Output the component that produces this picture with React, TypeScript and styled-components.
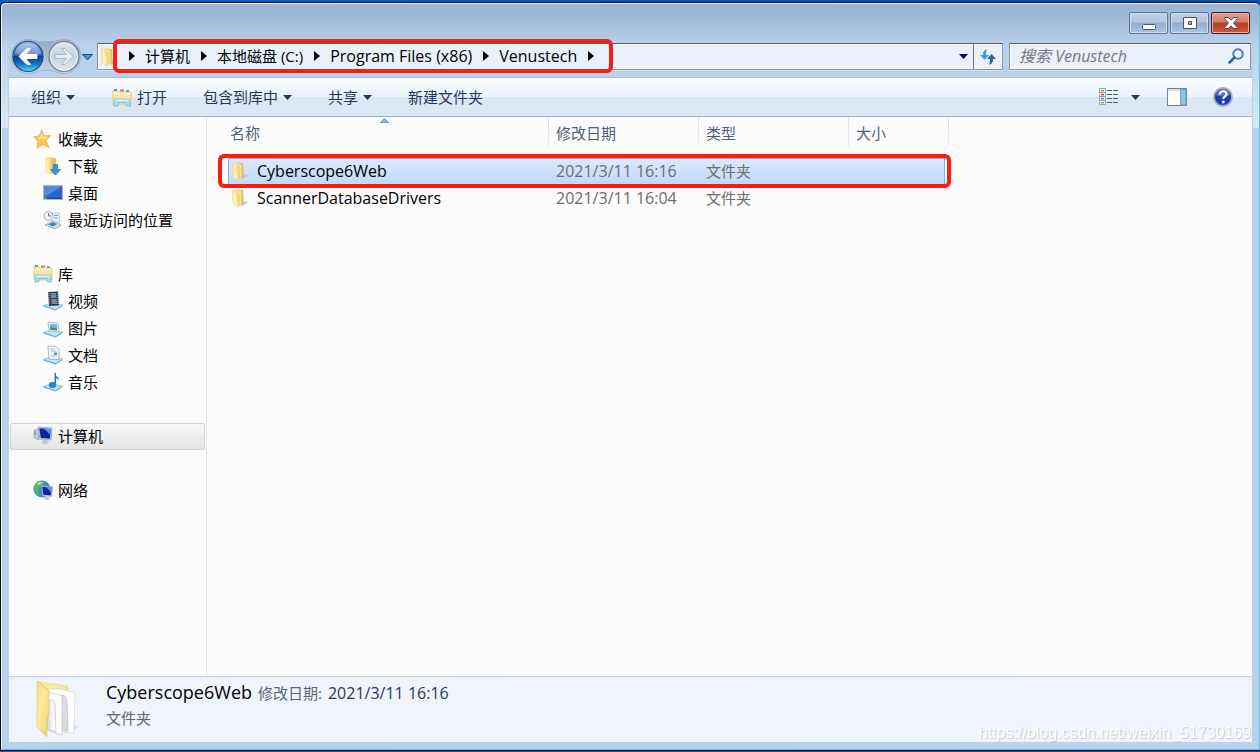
import React from 'react';
import styled, { createGlobalStyle, css } from 'styled-components';

const uiFont = `'Open Sans', 'Noto Sans CJK SC', sans-serif`;

const GlobalStyle = createGlobalStyle`
  *, *::before, *::after { box-sizing: border-box; }
  body { margin: 0; background: #0a5bb0; font-family: ${uiFont}; font-size: 15px; color: #000; }
  button, input { font: inherit; color: inherit; }
  button { background: none; border: 0; padding: 0; cursor: default; }
  svg { display: block; flex: none; }
`;

const Desktop = styled.div`
  display: flex;
  min-height: 100vh;
  padding: 2px 0 1px;
  background: linear-gradient(90deg, #0a5fc0, #0550a5);
`;

const Window = styled.div`
  position: relative;
  display: flex;
  flex: 1;
  min-width: 0;
  flex-direction: column;
  padding: 0 8px 8px;
  border: 1px solid #0a1420;
  border-right: 0;
  border-radius: 5px 5px 0 0;
  background:
    linear-gradient(180deg, #d9e6f500 40px, #d9e6f5 120px) left top / 7px 125px no-repeat,
    linear-gradient(180deg, #d9e6f500 40px, #d9e6f5 120px) right top / 7px 125px no-repeat,
    linear-gradient(180deg, #9bb5d3 0, #a1bad7 16px, #b9d1ea 42px, #b9d1ea 100%);
  box-shadow: inset 1px 1px 0 #e8f1fa, inset -1px -1px 0 #45c8e2;
`;

const TitleBar = styled.header`
  display: flex;
  justify-content: flex-end;
  align-items: flex-end;
  gap: 2px;
  height: 35px;
  padding: 0 2px 4px 0;
`;

const CaptionButton = styled.button<{ $close?: boolean }>`
  display: flex;
  align-items: center;
  justify-content: center;
  width: 39px;
  height: 22px;
  border: 1px solid ${p => (p.$close ? '#4f1520' : '#5c7592')};
  border-radius: 2px;
  background: ${p =>
    p.$close
      ? 'linear-gradient(180deg, #e0a193 0, #d27c6c 45%, #b83c26 50%, #c95b43 100%)'
      : 'linear-gradient(180deg, #c0d3e8 0, #b0c7df 45%, #91afcf 50%, #a9c4e0 100%)'};
  box-shadow: inset 0 0 0 1px ${p => (p.$close ? '#e6b0a5' : '#cfdeee')};
`;

const NavRow = styled.nav`
  display: flex;
  align-items: center;
  height: 39px;
  padding: 0 1px 2px 2px;
`;

const History = styled.div`
  display: flex;
  width: 86px;
`;

const AddressBar = styled.div`
  position: relative;
  display: flex;
  flex: 1;
  min-width: 0;
  align-items: center;
  height: 27px;
  padding-left: 2px;
  margin-right: 6px;
  border: 1px solid #8696aa;
  border-top-color: #55616f;
  border-radius: 1px;
  background: #eaf1fa;
  box-shadow: inset 0 0 0 1px #f8fbfe, 0 1px 0 #d5e3f2;
`;

const Crumbs = styled.div`
  display: flex;
  flex: 1;
  align-items: center;
  padding-bottom: 2px;
`;

const Crumb = styled.button<{ $latin: boolean }>`
  display: flex;
  align-items: center;
  font-size: ${p => (p.$latin ? 16 : 15)}px;
  line-height: 24px;
  white-space: nowrap;
`;

const CrumbArrow = styled.span`
  display: flex;
  justify-content: center;
  width: 27px;
`;

const BarButton = styled.button<{ $divided?: boolean }>`
  display: flex;
  align-items: center;
  justify-content: center;
  width: ${p => (p.$divided ? 29 : 20)}px;
  height: 25px;
  border-left: ${p => (p.$divided ? '1px solid #66758a' : '0')};
`;

const Highlight = styled.div<{ $kind: 'path' | 'row' }>`
  position: absolute;
  border: 4px solid #fe1b12;
  border-radius: 6px;
  pointer-events: none;
  ${p =>
    p.$kind === 'path'
      ? css`top: -5px; bottom: -4px; left: 15px; width: 500px;`
      : css`top: 37px; left: 11px; width: 733px; height: 34px;`}
`;

const SearchBox = styled.label`
  display: flex;
  align-items: center;
  width: 242px;
  height: 27px;
  padding: 0 6px 2px 9px;
  border: 1px solid #8696aa;
  border-top-color: #55616f;
  border-radius: 1px;
  background: #eaf1fa;
  box-shadow: inset 0 0 0 1px #f8fbfe, 0 1px 0 #d5e3f2;
`;

const SearchInput = styled.input`
  flex: 1;
  min-width: 0;
  padding: 0;
  border: 0;
  outline: 0;
  background: transparent;
  font-size: 16px;
  font-style: italic;
  &::placeholder { color: #75797f; opacity: 1; }
`;

const Toolbar = styled.div`
  display: flex;
  align-items: center;
  height: 40px;
  padding: 0 19px 0 22px;
  border-top: 1px solid #a9c0dc;
  border-bottom: 1px solid #9db2cc;
  background: linear-gradient(180deg, #fbfdff 0, #eaf1fb 50%, #dce6f4 51%, #dce7f5 100%);
  color: #1e395b;
`;

const ToolButton = styled.button<{ $gap: number }>`
  display: flex;
  align-items: center;
  gap: 5px;
  margin-right: ${p => p.$gap}px;
  white-space: nowrap;
`;

const ToolLabel = styled.span`
  padding-bottom: 2px;
`;

const Spacer = styled.div`
  flex: 1;
`;

const Body = styled.div`
  display: flex;
  flex: 1;
  min-height: 0;
  background: #fcfcfc;
`;

const Sidebar = styled.aside`
  flex: none;
  width: 198px;
  padding: 9px 1px;
  border-right: 1px solid #d6e5f5;
`;

const Group = styled.ul`
  margin: 0 0 27px;
  padding: 0;
  list-style: none;
`;

const Entry = styled.button<{ $child?: boolean; $selected?: boolean }>`
  display: flex;
  align-items: center;
  gap: 5px;
  width: 100%;
  height: 27px;
  padding-bottom: 2px;
  padding-left: ${p => (p.$child ? 32 : 22)}px;
  border: 1px solid ${p => (p.$selected ? '#d2d2d2' : 'transparent')};
  border-radius: 2px;
  background: ${p => (p.$selected ? 'linear-gradient(180deg, #f8f8f8, #e4e4e4)' : 'none')};
  white-space: nowrap;
`;

const FileList = styled.main`
  position: relative;
  flex: 1;
  min-width: 0;
  padding-left: 13px;
`;

const Table = styled.table`
  width: 729px;
  table-layout: fixed;
  border-collapse: separate;
  border-spacing: 0;
`;

const HeadCell = styled.th<{ $first?: boolean }>`
  position: relative;
  height: 41px;
  padding: 0 0 0 ${p => (p.$first ? 10 : 7)}px;
  background: linear-gradient(180deg, #d3e3f5, #e8f0f8) right top / 1px 30px no-repeat;
  color: #4c607a;
  font-weight: 400;
  line-height: 32px;
  text-align: left;
  vertical-align: top;
`;

const SortMark = styled.svg`
  position: absolute;
  top: 1px;
  left: 0;
  right: 0;
  margin: 0 auto;
`;

const Cell = styled.td<{ $latin?: boolean }>`
  height: 27px;
  padding: 0 0 2px 7px;
  color: #6d6d6d;
  font-size: ${p => (p.$latin ? 16 : 15)}px;
  line-height: 22px;
  white-space: nowrap;
`;

const Row = styled.tr<{ $selected?: boolean }>`
  ${p =>
    p.$selected &&
    css`
      ${Cell}:not(:first-child):not(:last-child) {
        border: solid #84acdd;
        border-width: 1px 0;
        background: linear-gradient(180deg, #dce9fb, #c0d9fb);
      }
      ${Cell}:nth-child(2) { box-shadow: inset 1px 0 0 #84acdd; }
      ${Cell}:nth-last-child(2) { box-shadow: inset -1px 0 0 #84acdd; }
    `}
`;

const FileName = styled.div`
  display: flex;
  align-items: center;
  gap: 8px;
  margin-left: -4px;
  color: #000;
`;

const Details = styled.footer`
  display: flex;
  align-items: flex-start;
  height: 66px;
  padding: 3px 0 0 25px;
  border-top: 1px solid #c6d6e8;
  background: linear-gradient(180deg, #e2ebf6 0, #f0f4fc 3px, #f0f4fc 100%);
`;

const DetailsText = styled.div`
  padding-left: 26px;
`;

const DetailsLine = styled.div`
  display: flex;
  align-items: baseline;
  line-height: 25px;
  color: #5a6779;
`;

const DetailsName = styled.span`
  margin-right: 6px;
  font-size: 18px;
  color: #000;
`;

const DetailsValue = styled.span`
  margin-left: 6px;
  font-size: 16px;
  color: #1e395b;
`;

const Watermark = styled.div`
  position: absolute;
  right: 9px;
  bottom: 7px;
  font-family: 'Liberation Sans', sans-serif;
  font-size: 16px;
  line-height: 20px;
  color: #fff;
  text-shadow: 1px 1px 1px #c4c6cc;
`;

const Down = ({ color = '#1e395b' }: { color?: string }) => (
  <svg width="9" height="5" viewBox="0 0 9 5"><path d="M0 0h9L4.500 5z" fill={color} /></svg>
);

const Right = () => (
  <svg width="6" height="10" viewBox="0 0 6 10"><path d="M0 0l6 5-6 5z" fill="#000" /></svg>
);

const HistoryArt = () => (
  <svg width="84" height="37" viewBox="0 0 84 37">
    <defs>
      <linearGradient id="backFill" x1="0" y1="0" x2="0" y2="1">
        <stop offset="0" stopColor="#a4bfe6" /><stop offset=".45" stopColor="#3a6cc0" />
        <stop offset=".5" stopColor="#0b3c98" /><stop offset=".75" stopColor="#1673ce" /><stop offset="1" stopColor="#51dcfb" />
      </linearGradient>
      <linearGradient id="fwdFill" x1="0" y1="0" x2="0" y2="1">
        <stop offset="0" stopColor="#dde5ee" /><stop offset=".5" stopColor="#c6d3e1" /><stop offset="1" stopColor="#e3eaf2" />
      </linearGradient>
      <linearGradient id="trayFill" x1="0" y1="0" x2="0" y2="1">
        <stop offset="0" stopColor="#8fa8c4" /><stop offset="1" stopColor="#c4d6ea" />
      </linearGradient>
    </defs>
    <path d="M17 1.500c5 0 8 2 12 2h12c4 0 7-2 12-2a17 17 0 0 1 0 34c-7 0-9-3-14-3h-8c-5 0-7 3-14 3a17 17 0 0 1 0-34z" fill="url(#trayFill)" stroke="#9db5d0" />
    <circle cx="17" cy="18.500" r="15" fill="url(#backFill)" stroke="#2a4878" strokeWidth="1.200" />
    <path d="M4 15a13.500 13.500 0 0 1 26 0c-7 3-19 3-26 0z" fill="#fff" opacity=".25" />
    <path d="M8 18.500l8-8h3.500l-5 6H26v4H14.500l5 6H16z" fill="#fff" stroke="#fff" strokeLinejoin="round" />
    <circle cx="53" cy="18.500" r="15" fill="url(#fwdFill)" stroke="#6c7987" strokeWidth="1.200" />
    <circle cx="53" cy="18.500" r="13.500" fill="none" stroke="#edf2f7" />
    <path d="M62 18.500l-8-8h-3.500l5 6H44v4h11.500l-5 6H54z" fill="#e6ecf2" stroke="#a9b8c8" strokeLinejoin="round" />
    <path d="M71.500 16.500h10L76.500 22z" fill="#4d91d2" stroke="#174d8b" strokeLinejoin="round" />
  </svg>
);

const Folder = () => (
  <svg width="18" height="20" viewBox="0 0 18 20">
    <path d="M9 16l6-3 2 2-6 3z" fill="#b9bcc2" opacity=".7" />
    <path d="M6 1.500l6 .5.700 14L7 18z" fill="#e0bf69" />
    <path d="M1.500 2l5-1 1.500 2 2.500.3V16L7.500 18.500 2 16z" fill="#f6e29a" />
    <path d="M1.500 2l4 2.500L7 19l-5-3z" fill="#fbefbb" stroke="#e6cf80" strokeWidth=".5" />
    <path d="M6 5l3 .5v11L7 18.500z" fill="#eed684" />
  </svg>
);

const Library = () => (
  <svg width="20" height="19" viewBox="0 0 20 19">
    <path d="M1 2.500h4l1 1.500h12.500l.5 1v11H1z" fill="#f7e6a4" stroke="#d9bd6b" strokeWidth=".8" />
    <path d="M1.500 4.500h17v2h-17z" fill="#fdf4cb" />
    <path d="M2 1h3v2H2z" fill="#4bae5c" /><path d="M8 1.500h4v2H8z" fill="#e8705f" /><path d="M14 2h3v2h-3z" fill="#6ba3e0" />
    <path d="M3 11h14l1.500 7h-4l-1-3.500h-7l-1 3.500h-4z" fill="#a9def5" stroke="#6bb3d8" strokeWidth=".7" />
    <path d="M3.500 11.500h13l.4 1.500H3.200z" fill="#d9f2fc" />
  </svg>
);

const Star = () => (
  <svg width="20" height="20" viewBox="0 0 20 20">
    <path d="M8.500.8l2.500 6 6.500-.2-4.500 5 3 7-6.500-3.200-5.500 4 1-7L.8 7.800l5.700-1z" fill="#fdc44c" stroke="#ec9d42" strokeWidth=".7" />
    <path d="M8.500 2.500l1.500 5 5 .2-4 2L5 11l.8-2.500L2.500 8.200l4.600-.7z" fill="#ffe191" />
  </svg>
);

const Download = () => (
  <svg width="20" height="20" viewBox="0 0 20 20">
    <path d="M2 2l5-1 6 1v15l-5 1-6-1z" fill="#f3dc8c" /><path d="M8 2l5 .5V17l-4 1z" fill="#dfc06d" />
    <path d="M2 2l4 2.500L7 19l-5-3z" fill="#fbeeb4" />
    <path d="M10.500 8.500h4v5h3L12.500 19l-5-5.500h3z" fill="#3199dd" stroke="#1971b6" strokeWidth=".7" />
  </svg>
);

const DesktopIcon = () => (
  <svg width="20" height="16" viewBox="0 0 20 16">
    <path d="M.5.5h19v14H.5z" fill="#2e65cc" stroke="#a9b8ca" />
    <path d="M1 1h18L7 9 1 11z" fill="#6fa1ec" opacity=".6" /><path d="M1 12.500h18V14H1z" fill="#244a8f" />
    <path d="M1 12.500h3V14H1z" fill="#45b560" />
  </svg>
);

const Recent = () => (
  <svg width="20" height="20" viewBox="0 0 20 20">
    <path d="M8 3h8l1 9H9z" fill="#eaf3fa" stroke="#9eb3c4" strokeWidth=".7" />
    <path d="M11 5.500h4M11 8h4" stroke="#6ea1cc" />
    <path d="M2 15l8-4 8 4-6 4z" fill="#d6dee5" stroke="#8c9aa6" strokeWidth=".7" />
    <path d="M5 14.500l5-2.500 4 2-4 2.500z" fill="#3c86b5" />
    <circle cx="5.500" cy="6" r="4.500" fill="#edf3f7" stroke="#a0aeba" /><path d="M5.500 3v3h2.500" fill="none" stroke="#587690" />
  </svg>
);

const Tray = ({ children }: { children: React.ReactNode }) => (
  <svg width="20" height="20" viewBox="0 0 20 20">
    <path d="M.5 14.500L8 12l11.500 2-7 4.500z" fill="#c0e5f7" stroke="#6cb5db" strokeWidth=".7" />
    <path d="M.5 14.500v1l12 4 7-4.500v-1l-7 4.500z" fill="#5cabd4" />
    {children}
  </svg>
);

const Video = () => (
  <Tray>
    <path d="M5 1l10-.5 1 14-10 .5z" fill="#333b46" /><path d="M7.500 2h5.500l.5 5H8zM8 8h5.500l.5 5H8.500z" fill="#4594cc" />
    <path d="M8 5h3v2H8zM10 10h4v2h-4z" fill="#d76a36" /><path d="M6 2v12M15 2v12" stroke="#ccd5dc" strokeDasharray="1 1" />
  </Tray>
);
const Pictures = () => (
  <Tray><path d="M5 4l10 1 1 9-10-1z" fill="#eef6fb" stroke="#9fb2c2" strokeWidth=".8" /><path d="M7 6l7 .6.4 5.500-6.900-.7z" fill="#6aafe0" /><path d="M7 9l3 1 4 .4v2l-7-.6z" fill="#4b855f" /></Tray>
);
const Docs = () => (
  <Tray><path d="M5 1l8 .5 3 3v10l-10-.5z" fill="#f5f8fb" stroke="#9ca9ba" strokeWidth=".8" /><path d="M7.500 4h4M7.500 6h6M7.500 11h6" stroke="#a6b9d0" /><path d="M11 7.500h3v2.500h-3z" fill="#648bbb" /></Tray>
);
const Music = () => (
  <Tray><path d="M12.500 1c0 4 4 4 3 8-.5-2-1.500-2.500-2.500-2.800V13z" fill="#1b79b9" /><path d="M12.300 1v12" stroke="#1b79b9" strokeWidth="1.400" /><ellipse cx="9.500" cy="13" rx="3.800" ry="3" fill="#2387c7" /></Tray>
);

const Screen = () => (
  <>
    <path d="M5 1l14 1-1 12-11-1z" fill="#d3d9e2" stroke="#8b96a7" strokeWidth=".7" />
    <path d="M6.200 2.200l11.600.8-.8 9.700-9.200-.8z" fill="#1025a5" /><path d="M11 2.500l6.800.5-.5 6z" fill="#668ff0" />
    <path d="M10 14h4l2 3-4 1.500L8 17z" fill="#c3c9d0" />
  </>
);
const Computer = () => (
  <svg width="20" height="20" viewBox="0 0 20 20"><path d="M1 4l5-1v11l-5-2z" fill="#c4cbd2" stroke="#8f9aa6" strokeWidth=".6" /><path d="M2 5v4" stroke="#3ba154" /><Screen /></svg>
);
const Network = () => (
  <svg width="20" height="20" viewBox="0 0 20 20">
    <circle cx="9" cy="9" r="8.500" fill="#2f8fd0" /><path d="M2 5c3-5 7-4 10-3L9 6l-3 1-1 4 2 5c-5-2-6-7-5-11z" fill="#62b64b" /><path d="M4 4c2-2 4-2 6-2L6 5z" fill="#d6f2c8" />
    <g transform="translate(4 5) scale(.82)"><Screen /></g>
  </svg>
);

const Refresh = () => (
  <svg width="18" height="18" viewBox="0 0 18 18">
    <path d="M8 1.500C5 1.500 4 4 4 7H1l4.500 5L10 7H7c0-2 0-4 1-5.500z" fill="#3d9bd9" />
    <path d="M10 16.500c3 0 4-2.500 4-5.500h3l-4.500-5L8 11h3c0 2 0 4-1 5.500z" fill="#2566b5" />
  </svg>
);
const Magnifier = () => (
  <svg width="16" height="16" viewBox="0 0 16 16"><circle cx="10" cy="6" r="4.700" fill="#f5faff" stroke="#3e7cc0" strokeWidth="2" /><path d="M6.500 9.500L1.500 14.500" stroke="#315f9e" strokeWidth="2.500" strokeLinecap="round" /></svg>
);
const ViewIcon = () => (
  <svg width="20" height="18" viewBox="0 0 20 18">
    {['#6aa36b', '#d8402f', '#3f87cb', '#7bb648'].map((c, i) => (
      <g key={c} transform={`translate(0 ${i * 4})`}><path d="M.5.5h6v4h-6z" fill="#fff" stroke="#8593a5" strokeWidth=".8" /><path d="M2 1.800h3v1.600H2z" fill={c} /><path d="M8 2.500h5M14 2.500h5" stroke="#4c5f7a" /></g>
    ))}
  </svg>
);
const PaneIcon = () => (
  <svg width="20" height="18" viewBox="0 0 20 18"><path d="M.5.500h19v17H.5z" fill="#fff" stroke="#6f8196" /><path d="M1 1h18v2H1z" fill="#d8e0ea" /><path d="M13.500 1H19v16h-5.500z" fill="#8ac6e0" stroke="#5c98b6" strokeWidth=".8" /></svg>
);
const HelpIcon = () => (
  <svg width="20" height="20" viewBox="0 0 20 20">
    <circle cx="10" cy="10" r="9" fill="#1d3fae" stroke="#a5adbb" strokeWidth="1.800" />
    <path d="M3 8a7 6 0 0 1 14 0c-4 2-10 2-14 0z" fill="#7fa3ea" opacity=".5" />
    <path d="M6.800 7.500c0-4.500 6.700-4 6.700-.3 0 2.300-3.200 2.300-3.200 4.800" fill="none" stroke="#fff" strokeWidth="2.200" /><circle cx="10.300" cy="15" r="1.400" fill="#fff" />
  </svg>
);

const BigFolder = () => (
  <svg width="46" height="58" viewBox="0 0 46 58">
    <defs>
      <linearGradient id="bigFront" x1="0" y1="0" x2="1" y2="1"><stop offset="0" stopColor="#f3dd84" /><stop offset=".4" stopColor="#fbeb9c" /><stop offset="1" stopColor="#ecd06f" /></linearGradient>
      <linearGradient id="bigPaper" x1="0" y1="0" x2="1" y2="0"><stop offset="0" stopColor="#d4d4d4" /><stop offset=".5" stopColor="#f4f4f4" /><stop offset="1" stopColor="#fff" /></linearGradient>
    </defs>
    <path d="M28 54l13-4 3-4-3-1z" fill="#c8ccd4" opacity=".5" />
    <path d="M3 1l31 5 1 13-21 2z" fill="#ecd37c" />
    <path d="M5 1.500L33 6.500v3L14 9z" fill="#f8e89f" />
    <path d="M15 9l13 0 13 4-1 40-13-2-12-8z" fill="#fff" stroke="#cfcfcf" strokeWidth=".6" />
    <path d="M27 15c4 0 5 2 6 6l1 30-6-1z" fill="#dcdcdc" stroke="#b5b5b5" strokeWidth=".6" />
    <path d="M15 12l13 4v39L13 50z" fill="#fff" stroke="#c3c3c3" strokeWidth=".6" />
    <path d="M15 20c4-1 6 1 6 5l1 27-9-3z" fill="url(#bigPaper)" stroke="#b5b5b5" strokeWidth=".6" />
    <path d="M3 1l12 10v24l-2 4v18L3 47z" fill="url(#bigFront)" stroke="#e3c975" strokeWidth=".6" />
  </svg>
);

const groups = [
  { root: '收藏夹', icon: <Star />, items: [['下载', <Download />], ['桌面', <DesktopIcon />], ['最近访问的位置', <Recent />]] },
  { root: '库', icon: <Library />, items: [['视频', <Video />], ['图片', <Pictures />], ['文档', <Docs />], ['音乐', <Music />]] },
  { root: '计算机', icon: <Computer />, selected: true, items: [] },
  { root: '网络', icon: <Network />, items: [] },
] as { root: string; icon: React.ReactNode; selected?: boolean; items: [string, React.ReactNode][] }[];

const crumbs = [
  { label: '计算机', latin: false },
  { label: '本地磁盘 (C:)', latin: false },
  { label: 'Program Files (x86)', latin: true },
  { label: 'Venustech', latin: true },
];

const files = [
  { name: 'Cyberscope6Web', date: '2021/3/11 16:16', selected: true },
  { name: 'ScannerDatabaseDrivers', date: '2021/3/11 16:04', selected: false },
];

export default function App() {
  return (
    <Desktop>
      <GlobalStyle />
      <Window>
        <TitleBar>
          <CaptionButton aria-label="最小化">
            <svg width="14" height="18" viewBox="0 0 14 18"><rect x=".5" y="10.500" width="13" height="5" rx="1" fill="#fff" stroke="#48566a" /></svg>
          </CaptionButton>
          <CaptionButton aria-label="最大化">
            <svg width="14" height="14" viewBox="0 0 14 14"><path fillRule="evenodd" d="M.5 1.500h13v11H.5zM5.500 5.500v3h3v-3z" fill="#fff" stroke="#48566a" /></svg>
          </CaptionButton>
          <CaptionButton $close aria-label="关闭">
            <svg width="14" height="14" viewBox="0 0 14 14"><path d="M.5 1.500h4L7 4.200l2.500-2.700h4v1L9.500 7l4 4.500v1h-4L7 9.800l-2.500 2.700h-4v-1L4.500 7l-4-4.500z" fill="#fff" stroke="#5a4650" /></svg>
          </CaptionButton>
        </TitleBar>

        <NavRow>
          <History><HistoryArt /></History>
          <AddressBar>
            <Folder />
            <Crumbs>
              {crumbs.map(c => (
                <Crumb key={c.label} $latin={c.latin}><CrumbArrow><Right /></CrumbArrow>{c.label}</Crumb>
              ))}
              <CrumbArrow><Right /></CrumbArrow>
            </Crumbs>
            <BarButton aria-label="历史路径"><Down color="#0a0a50" /></BarButton>
            <BarButton $divided aria-label="刷新"><Refresh /></BarButton>
            <Highlight $kind="path" />
          </AddressBar>
          <SearchBox>
            <SearchInput aria-label="搜索" placeholder="搜索 Venustech" />
            <Magnifier />
          </SearchBox>
        </NavRow>

        <Toolbar>
          <ToolButton $gap={37}><ToolLabel>组织</ToolLabel><Down /></ToolButton>
          <ToolButton $gap={36}><Library /><ToolLabel>打开</ToolLabel></ToolButton>
          <ToolButton $gap={36}><ToolLabel>包含到库中</ToolLabel><Down /></ToolButton>
          <ToolButton $gap={36}><ToolLabel>共享</ToolLabel><Down /></ToolButton>
          <ToolButton $gap={0}><ToolLabel>新建文件夹</ToolLabel></ToolButton>
          <Spacer />
          <ToolButton $gap={12} aria-label="视图"><ViewIcon /></ToolButton>
          <ToolButton $gap={27} aria-label="更多视图"><Down /></ToolButton>
          <ToolButton $gap={26} aria-label="预览窗格"><PaneIcon /></ToolButton>
          <ToolButton $gap={0} aria-label="帮助"><HelpIcon /></ToolButton>
        </Toolbar>

        <Body>
          <Sidebar>
            {groups.map(g => (
              <Group key={g.root}>
                <li><Entry $selected={g.selected}>{g.icon}{g.root}</Entry></li>
                {g.items.map(([label, icon]) => (
                  <li key={label}><Entry $child>{icon}{label}</Entry></li>
                ))}
              </Group>
            ))}
          </Sidebar>
          <FileList>
            <Table>
              <colgroup>
                <col width="8" /><col width="321" /><col width="150" /><col width="150" /><col width="96" /><col width="4" />
              </colgroup>
              <thead>
                <tr>
                  <HeadCell $first colSpan={2}>
                    名称
                    <SortMark width="9" height="5" viewBox="0 0 9 5"><path d="M0 5l4.500-4.500L9 5z" fill="#83bfdc" stroke="#406d8a" strokeWidth=".6" /></SortMark>
                  </HeadCell>
                  <HeadCell>修改日期</HeadCell>
                  <HeadCell>类型</HeadCell>
                  <HeadCell colSpan={2}>大小</HeadCell>
                </tr>
              </thead>
              <tbody>
                {files.map(f => (
                  <Row key={f.name} $selected={f.selected}>
                    <Cell />
                    <Cell $latin><FileName><Folder />{f.name}</FileName></Cell>
                    <Cell $latin>{f.date}</Cell>
                    <Cell>文件夹</Cell>
                    <Cell />
                    <Cell />
                  </Row>
                ))}
              </tbody>
            </Table>
            <Highlight $kind="row" />
          </FileList>
        </Body>

        <Details>
          <BigFolder />
          <DetailsText>
            <DetailsLine><DetailsName>Cyberscope6Web</DetailsName>修改日期:<DetailsValue>2021/3/11 16:16</DetailsValue></DetailsLine>
            <DetailsLine>文件夹</DetailsLine>
          </DetailsText>
        </Details>
        <Watermark>https://blog.csdn.net/weixin_51730169</Watermark>
      </Window>
    </Desktop>
  );
}
